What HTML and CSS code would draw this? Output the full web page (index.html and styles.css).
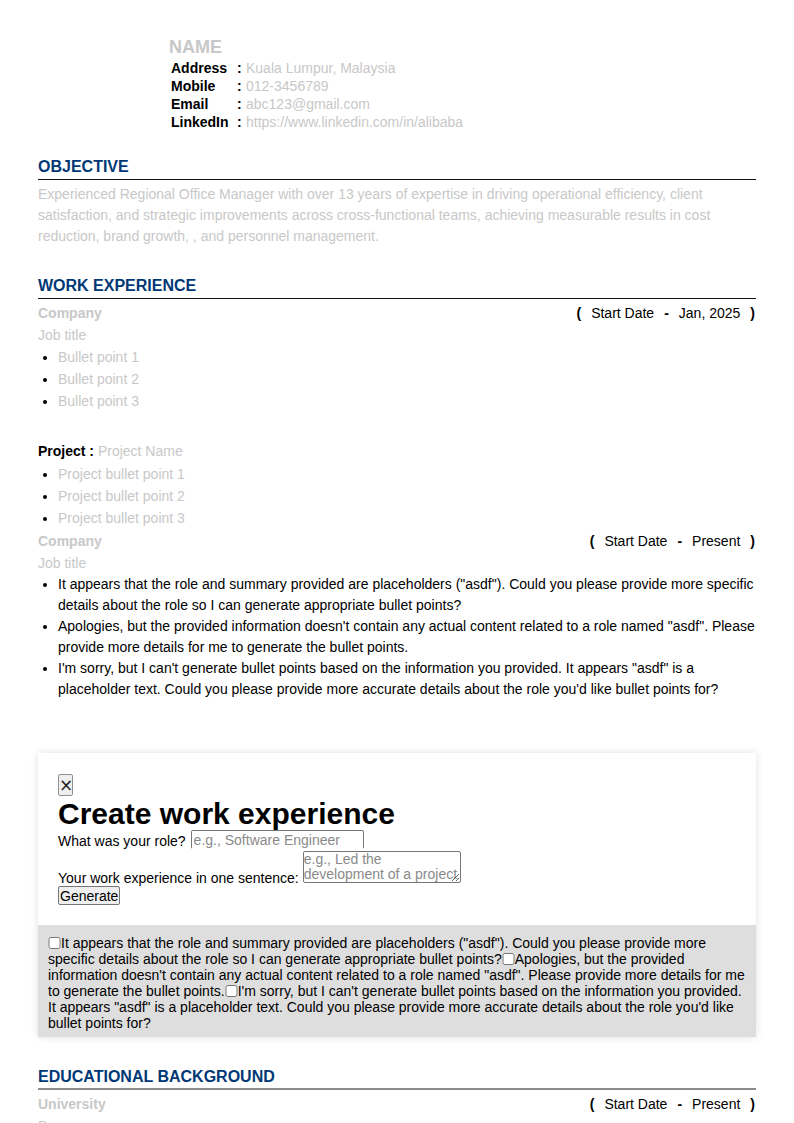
FILE: index.html
```html
<!DOCTYPE html>
<html lang="en">
<head>
<meta charset="utf-8">
<title>Resume</title>
<link rel="stylesheet" href="styles.css">
</head>
<body>
<div class="page">
  <header class="head">
    <div class="name">NAME</div>
    <div class="contact">
      <span class="lbl">Address</span><span class="colon">:</span><span class="val">Kuala Lumpur, Malaysia</span>
      <span class="lbl">Mobile</span><span class="colon">:</span><span class="val">012-3456789</span>
      <span class="lbl">Email</span><span class="colon">:</span><span class="val">abc123@gmail.com</span>
      <span class="lbl">LinkedIn</span><span class="colon">:</span><span class="val">https://www.linkedin.com/in/alibaba</span>
    </div>
  </header>

  <section class="sec sec-obj">
    <h2 class="sec-title">OBJECTIVE</h2>
    <p class="obj">Experienced Regional Office Manager with over 13 years of expertise in driving operational efficiency, client satisfaction, and strategic improvements across cross-functional teams, achieving measurable results in cost reduction, brand growth, , and personnel management.</p>
  </section>

  <section class="sec sec-work">
    <h2 class="sec-title">WORK EXPERIENCE</h2>
    <div class="entry">
      <div class="row">
        <span class="company">Company</span>
        <span class="dates"><b>(</b><span>Start Date</span><b>-</b><span>Jan, 2025</span><b>)</b></span>
      </div>
      <div class="muted">Job title</div>
      <ul class="list">
        <li class="muted">Bullet point 1</li>
        <li class="muted">Bullet point 2</li>
        <li class="muted">Bullet point 3</li>
      </ul>
      <div class="project"><b>Project :</b> <span class="muted">Project Name</span></div>
      <ul class="list">
        <li class="muted">Project bullet point 1</li>
        <li class="muted">Project bullet point 2</li>
        <li class="muted">Project bullet point 3</li>
      </ul>
    </div>
    <div class="entry entry-next">
      <div class="row">
        <span class="company">Company</span>
        <span class="dates"><b>(</b><span>Start Date</span><b>-</b><span>Present</span><b>)</b></span>
      </div>
      <div class="muted">Job title</div>
      <ul class="list list-ai">
        <li>It appears that the role and summary provided are placeholders ("asdf"). Could you please provide more specific details about the role so I can generate appropriate bullet points?</li>
        <li>Apologies, but the provided information doesn't contain any actual content related to a role named "asdf". Please provide more details for me to generate the bullet points.</li>
        <li>I'm sorry, but I can't generate bullet points based on the information you provided. It appears "asdf" is a placeholder text. Could you please provide more accurate details about the role you'd like bullet points for?</li>
      </ul>
    </div>
  </section>

  <div class="card">
    <div class="card-form">
      <button class="close" type="button">&times;</button>
      <h1 class="card-title">Create work experience</h1>
      <div class="frow frow-1">
        <label for="role">What was your role?</label>
        <input id="role" class="inp" type="text" placeholder="e.g., Software Engineer">
      </div>
      <div class="frow frow-2">
        <label for="sum">Your work experience in one sentence:</label>
        <textarea id="sum" class="ta" placeholder="e.g., Led the development of a project"></textarea>
      </div>
      <button class="gen" type="button">Generate</button>
    </div>
    <div class="card-out"><input type="checkbox" class="cb">It appears that the role and summary provided are placeholders ("asdf"). Could you please provide more specific details about the role so I can generate appropriate bullet points?<input type="checkbox" class="cb">Apologies, but the provided information doesn't contain any actual content related to a role named "asdf". Please provide more details for me to generate the bullet points.<input type="checkbox" class="cb">I'm sorry, but I can't generate bullet points based on the information you provided. It appears "asdf" is a placeholder text. Could you please provide more accurate details about the role you'd like bullet points for?</div>
  </div>

  <section class="sec sec-edu">
    <h2 class="sec-title sec-title-gray">EDUCATIONAL BACKGROUND</h2>
    <div class="entry">
      <div class="row">
        <span class="company">University</span>
        <span class="dates"><b>(</b><span>Start Date</span><b>-</b><span>Present</span><b>)</b></span>
      </div>
      <div class="muted">Degree</div>
    </div>
  </section>
</div>
</body>
</html>
```
FILE: styles.css
```css
html, body {
  margin: 0;
  padding: 0;
  background: #fff;
}
body {
  font-family: "Liberation Sans", Arial, sans-serif;
  font-size: 14px;
  color: #000;
}
.page {
  padding: 36px 38px 40px;
}
.head {
  margin-left: 133px;
}
.name {
  font-size: 18px;
  font-weight: bold;
  color: #c8c8c8;
  line-height: 23px;
  margin-left: -2px;
}
.contact {
  display: grid;
  grid-template-columns: 66px 9px auto;
  justify-content: start;
  line-height: 18px;
}
.lbl { font-weight: bold; }
.colon { font-weight: bold; }
.val { color: #c8c8c8; }

.sec-obj { margin-top: 26px; }
.sec-work { margin-top: 29px; }
.sec-edu { margin-top: 30px; }

.sec-title {
  margin: 0;
  font-size: 16px;
  line-height: 19px;
  font-weight: bold;
  color: #003876;
  padding-bottom: 3px;
  border-bottom: 1px solid #111;
}
.sec-title-gray {
  padding-bottom: 2px;
  border-bottom: 2px solid #8c8c8c;
}
.obj {
  margin: 4px 0 0;
  line-height: 21px;
  color: #c8c8c8;
}
.entry {
  margin-top: 3px;
  line-height: 22px;
}
.entry-next {
  margin-top: 1px;
}
.row {
  display: flex;
  justify-content: space-between;
  align-items: center;
}
.company {
  font-weight: bold;
  color: #c8c8c8;
}
.dates {
  display: flex;
  gap: 10px;
  padding-right: 1px;
}
.muted { color: #c8c8c8; }
.list {
  margin: 0;
  padding-left: 20px;
}
.list li::marker { color: #000; }
.project {
  margin-top: 28px;
  margin-bottom: 1px;
}
.list-ai {
  line-height: 21px;
}

.card {
  margin-top: 53px;
  background: #fff;
  box-shadow: 0 0 8px rgba(0, 0, 0, 0.12);
}
.card-form {
  padding: 21px 20px 20px;
}
.close {
  display: block;
  width: 15px;
  height: 22px;
  padding: 0;
  margin: 0;
  font-family: "DejaVu Sans", sans-serif;
  font-size: 17px;
  line-height: 17px;
  color: #222;
  background: #efefef;
  border: 1px solid #8f8f8f;
  border-radius: 2px;
}
.card-title {
  margin: 2px 0 0;
  font-size: 30px;
  line-height: 32px;
  font-weight: bold;
}
.frow {
  display: flex;
  gap: 4px;
}
.frow-1 {
  align-items: center;
}
.frow-2 {
  align-items: flex-end;
}
.frow label {
  line-height: 16px;
}
.inp {
  box-sizing: border-box;
  width: 173px;
  height: 19px;
  margin: 0 0 2px 1px;
  padding: 0 2px;
  font: 14px "Liberation Sans", Arial, sans-serif;
  border: 1px solid #767676;
  border-bottom-color: transparent;
  border-radius: 2px;
}
.inp::placeholder, .ta::placeholder { color: #8a8a8a; }
.ta {
  box-sizing: border-box;
  width: 158px;
  height: 32px;
  margin: 0 0 3px;
  padding: 0;
  font: 14px/15px "Liberation Sans", Arial, sans-serif;
  border: 1px solid #767676;
  border-radius: 2px;
  resize: both;
}
.gen {
  display: block;
  height: 19px;
  padding: 0 1px;
  font: 14px "Liberation Sans", Arial, sans-serif;
  color: #000;
  background: #efefef;
  border: 1px solid #767676;
  border-radius: 2px;
}
.card-out {
  background: #dedede;
  padding: 10px 10px 6px;
  line-height: 16px;
}
.cb {
  width: 13px;
  height: 12px;
  margin: 0;
  vertical-align: -1px;
}
```
